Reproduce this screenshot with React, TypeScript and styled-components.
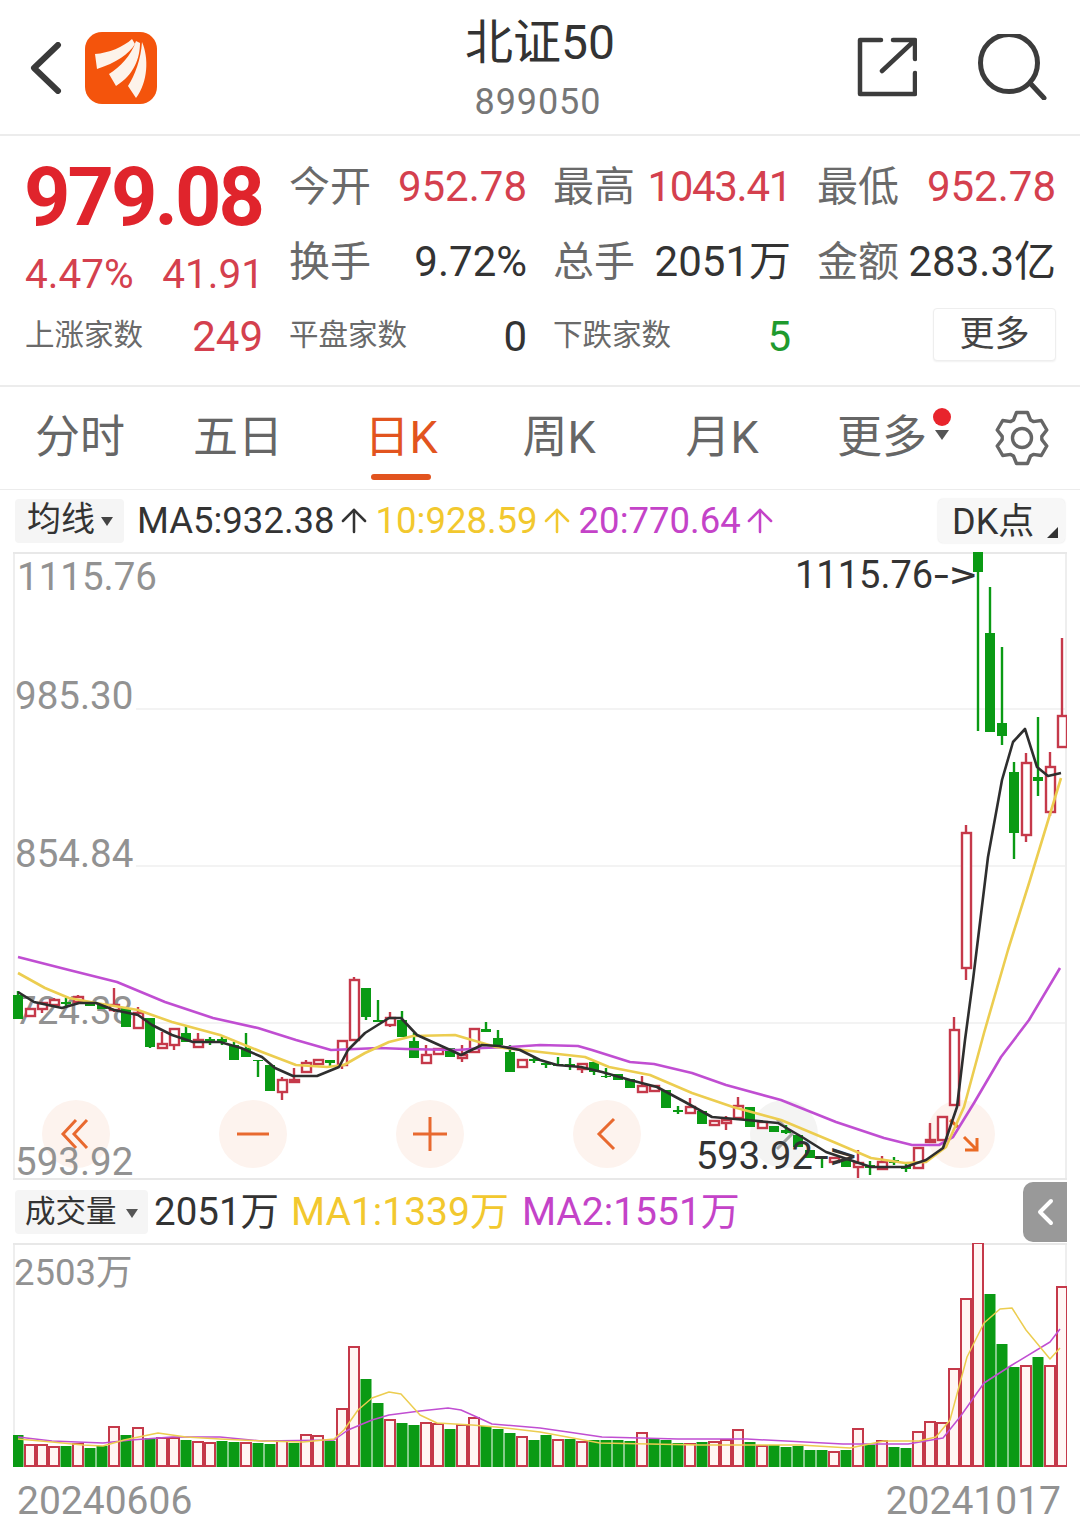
import React from 'react';
import styled, { createGlobalStyle } from 'styled-components';
import { ArrowUp } from 'lucide-react';

const GlobalStyle = createGlobalStyle`
  html, body {
    margin: 0;
    padding: 0;
    background: #fff;
  }
  body {
    font-family: Roboto, "Noto Sans CJK SC", sans-serif;
    color: #333;
  }
`;

const RED = '#c5394a';
const GREEN = '#0a9a14';
const YELLOW = '#f2c82e';
const PURPLE = '#c443c8';
const LINE_YELLOW = '#eccd50';
const LINE_PURPLE = '#c04ed2';

const Page = styled.div`
  width: 1080px;
  height: 1531px;
  overflow: hidden;
  display: flex;
  flex-direction: column;
  background: #fff;
`;

const Header = styled.header`
  height: 136px;
  box-sizing: border-box;
  border-bottom: 2px solid #ececec;
  display: grid;
  grid-template-columns: 1fr auto 1fr;
  align-items: center;
`;

const HeaderLeft = styled.div`
  display: flex;
  align-items: center;
  gap: 23px;
  padding: 2px 0 0 30px;
`;

const HeaderRight = styled.div`
  display: flex;
  justify-content: flex-end;
  align-items: center;
  gap: 60px;
  padding-right: 33px;
`;

const TitleBlock = styled.div`
  display: flex;
  flex-direction: column;
  align-items: center;
  margin-top: 6px;
`;

const Title = styled.div`
  font-size: 48px;
  line-height: 56px;
  color: #333;
`;

const Code = styled.div`
  font-size: 36px;
  line-height: 46px;
  letter-spacing: 0.9px;
  color: #777;
  margin: 8px 4px 0 0;
`;

const Stats = styled.section`
  height: 249px;
  box-sizing: border-box;
  padding: 13px 25px 0;
  display: grid;
  grid-template-columns: 237px 237px 237px 238px;
  grid-template-rows: repeat(3, 75px);
  column-gap: 27px;
`;

const Price = styled.div`
  align-self: end;
  margin: 0 0 -7px -1px;
  font-size: 81px;
  line-height: 66px;
  font-weight: 700;
  letter-spacing: -3px;
  color: #e0242c;
`;

const ChangeRow = styled.div`
  align-self: end;
  margin: 0 -2px 0 0;
  display: flex;
  justify-content: space-between;
  font-size: 40.5px;
  line-height: 50px;
  color: #d4404e;
`;

const Quote = styled.div`
  display: flex;
  justify-content: space-between;
  align-items: center;
`;

const QuoteLabel = styled.span<{ $small?: boolean }>`
  font-size: ${(p) => (p.$small ? '29.5px' : '41px')};
  line-height: 50px;
  margin-bottom: ${(p) => (p.$small ? '4px' : '0')};
  color: #6a6a6a;
`;

const QuoteValue = styled.span<{ $color?: string; $tight?: boolean }>`
  font-size: 42px;
  line-height: 50px;
  margin-right: -1px;
  letter-spacing: ${(p) => (p.$tight ? '-1.3px' : '0')};
  color: ${(p) => p.$color || '#333'};
`;

const MoreButton = styled.button`
  justify-self: end;
  align-self: center;
  width: 123px;
  height: 53px;
  margin: -5px -1px 0 0;
  padding: 0;
  border: 1px solid #eeeeee;
  border-radius: 4px;
  background: #fff;
  box-shadow: 0 1px 2px rgba(0, 0, 0, 0.06);
  font-family: inherit;
  font-size: 35px;
  line-height: 1;
  color: #444;
`;

const Tabs = styled.nav`
  height: 105px;
  box-sizing: border-box;
  border-top: 2px solid #ececec;
  border-bottom: 1px solid #ececec;
  display: grid;
  grid-template-columns: 160px 156px 170px 146px 180px 140px 1fr;
  align-items: stretch;
`;

const Tab = styled.div<{ $active?: boolean }>`
  position: relative;
  display: flex;
  align-items: center;
  justify-content: center;
  font-size: 45px;
  color: ${(p) => (p.$active ? '#e2541f' : '#666')};

  ${(p) =>
    p.$active &&
    `
    &::after {
      content: '';
      position: absolute;
      left: 55px;
      bottom: 9px;
      width: 60px;
      height: 6px;
      border-radius: 3px;
      background: #e2541f;
    }
  `}
`;

const TabLabel = styled.span`
  position: relative;
  line-height: 60px;
`;

const RedDot = styled.span`
  position: absolute;
  left: calc(100% + 6px);
  top: 0;
  width: 18px;
  height: 18px;
  border-radius: 50%;
  background: #e8242c;
`;

const Caret = styled.span<{ $color?: string; $size?: number }>`
  display: inline-block;
  width: 0;
  height: 0;
  border-left: ${(p) => p.$size || 7}px solid transparent;
  border-right: ${(p) => p.$size || 7}px solid transparent;
  border-top: ${(p) => (p.$size || 7) + 3}px solid ${(p) => p.$color || '#555'};
`;

const TabCaret = styled(Caret)`
  position: absolute;
  left: calc(100% + 8px);
  top: 22px;
`;

const GearCell = styled.div`
  display: flex;
  align-items: center;
  padding-left: 42px;
`;

const LegendRow = styled.div`
  height: 62px;
  box-sizing: border-box;
  padding: 0 15px;
  display: flex;
  align-items: center;
  gap: 11px;
`;

const Selector = styled.div`
  height: 44px;
  box-sizing: border-box;
  padding: 0 10px 4px 12px;
  margin-right: 2px;
  display: flex;
  align-items: center;
  gap: 6px;
  border-radius: 4px;
  background: #f5f5f5;
  font-size: 34px;
  line-height: 40px;
  color: #333;
  width: 109px;
`;

const SelectorCaret = styled(Caret)`
  margin-top: 4px;
`;

const LegendItem = styled.span<{ $color?: string }>`
  display: inline-flex;
  align-items: center;
  font-size: 36.5px;
  line-height: 50px;
  margin-bottom: 1px;
  color: ${(p) => p.$color || '#333'};
  white-space: nowrap;

  svg {
    margin-right: -8px;
  }
`;

const DkButton = styled.div`
  position: relative;
  margin-left: auto;
  width: 127px;
  height: 44px;
  box-sizing: border-box;
  padding: 0 0 7px 14px;
  display: flex;
  align-items: center;
  border-radius: 5px;
  background: #f7f7f7;
  box-shadow: 0 0 2px rgba(0, 0, 0, 0.12);
  font-size: 36px;
  color: #333;

  &::after {
    content: '';
    position: absolute;
    right: 7px;
    bottom: 5px;
    border-left: 11px solid transparent;
    border-bottom: 11px solid #333;
  }
`;

const ChartFrame = styled.div<{ $height: number }>`
  position: relative;
  width: 1054px;
  height: ${(p) => p.$height}px;
  margin-left: 13px;
  box-shadow: inset 0 2px 0 #e8e8e8, inset 2px 0 0 #eeeeee, inset -2px 0 0 #eeeeee;
`;

const ChartSvg = styled.svg`
  position: relative;
  display: block;
`;

const StepRow = styled.div`
  position: absolute;
  left: 29px;
  bottom: 12px;
  display: flex;
  gap: 109px;
`;

const StepButton = styled.div<{ $muted?: boolean }>`
  width: 68px;
  height: 68px;
  border-radius: 50%;
  background: ${(p) => (p.$muted ? '#f4f4f3' : '#fdf3ee')};
  display: flex;
  align-items: center;
  justify-content: center;
`;

const AxisLabel = styled.span<{ $top: number; $left?: number; $size?: number }>`
  position: absolute;
  left: ${(p) => p.$left ?? 3}px;
  top: ${(p) => p.$top}px;
  font-size: ${(p) => p.$size || 38.5}px;
  line-height: 44px;
  color: #929292;
`;

const Extreme = styled.span<{ $left: number; $top: number }>`
  position: absolute;
  left: ${(p) => p.$left}px;
  top: ${(p) => p.$top}px;
  font-size: 38px;
  line-height: 44px;
  color: #333;
  white-space: nowrap;
`;

const ExtremeArrow = styled.span`
  display: inline-block;
  transform: scaleX(1.4);
  transform-origin: left center;
  margin-left: 1px;
`;

const VolumeRow = styled(LegendRow)`
  height: 63px;
  padding-right: 13px;
  gap: 16px;
`;

const VolumeSelector = styled(Selector)`
  font-size: 30.5px;
  padding: 0 10px 0;
  gap: 9px;
  margin-right: -10px;
  width: 133px;
`;

const VolumeItem = styled.span<{ $color?: string; $size: number; $shift?: number }>`
  font-size: ${(p) => p.$size}px;
  line-height: 50px;
  margin-left: ${(p) => p.$shift || 0}px;
  margin-top: 1px;
  color: ${(p) => p.$color || '#333'};
  white-space: nowrap;
`;

const CollapseTab = styled.div`
  margin-left: auto;
  width: 44px;
  height: 60px;
  border-radius: 10px 0 0 10px;
  background: #999;
  display: flex;
  align-items: center;
  justify-content: center;
`;

const DateRow = styled.div`
  height: 64px;
  box-sizing: border-box;
  padding: 3px 19px 0 17px;
  display: flex;
  justify-content: space-between;
  align-items: center;
  font-size: 39px;
  color: #929292;
`;

// [high, bodyTop, bodyBottom, low, up] in page pixels, one candle every 12px from x=18
type Candle = [number, number, number, number, number];

const candles: Candle[] = [
  [991, 995, 1019, 1019, 0], [1009, 1009, 1016, 1016, 1], [1003, 1003, 1009, 1013, 1], [998, 1000, 1005, 1007, 1],
  [998, 1002, 1004, 1007, 0], [995, 997, 1002, 1002, 1], [1002, 1002, 1006, 1006, 0], [1005, 1005, 1009, 1009, 0],
  [988, 1005, 1010, 1012, 1], [1008, 1008, 1027, 1027, 0], [1007, 1013, 1028, 1028, 1], [1018, 1018, 1047, 1048, 0],
  [1032, 1044, 1048, 1048, 1], [1029, 1029, 1045, 1050, 1], [1026, 1033, 1042, 1042, 0], [1033, 1040, 1047, 1047, 1],
  [1037, 1039, 1042, 1045, 0], [1037, 1039, 1042, 1045, 0], [1042, 1045, 1060, 1060, 0], [1033, 1048, 1057, 1057, 0],
  [1060, 1060, 1061, 1077, 0], [1065, 1065, 1091, 1091, 0], [1077, 1080, 1092, 1100, 1], [1068, 1080, 1082, 1083, 1],
  [1060, 1063, 1072, 1072, 1], [1059, 1060, 1064, 1064, 1], [1060, 1060, 1063, 1067, 0], [1041, 1041, 1065, 1069, 1],
  [977, 980, 1040, 1040, 1], [988, 988, 1017, 1020, 0], [1000, 1020, 1022, 1022, 0], [1012, 1018, 1025, 1027, 1],
  [1011, 1020, 1037, 1037, 0], [1033, 1041, 1058, 1058, 0], [1045, 1055, 1063, 1063, 1], [1049, 1049, 1054, 1054, 1],
  [1048, 1048, 1057, 1057, 0], [1045, 1055, 1058, 1062, 1], [1029, 1029, 1052, 1052, 1], [1022, 1029, 1032, 1032, 0],
  [1030, 1038, 1045, 1045, 0], [1045, 1052, 1072, 1072, 0], [1060, 1060, 1067, 1067, 1], [1056, 1059, 1061, 1063, 0],
  [1063, 1063, 1065, 1068, 0], [1057, 1064, 1066, 1066, 0], [1058, 1064, 1066, 1070, 0], [1064, 1064, 1069, 1073, 1],
  [1060, 1062, 1072, 1075, 0], [1068, 1076, 1077, 1078, 0], [1074, 1074, 1080, 1080, 0], [1079, 1079, 1088, 1088, 0],
  [1076, 1086, 1092, 1093, 1], [1086, 1086, 1091, 1091, 1], [1090, 1090, 1108, 1108, 0], [1106, 1110, 1112, 1114, 0],
  [1098, 1107, 1113, 1113, 1], [1111, 1111, 1124, 1124, 0], [1121, 1121, 1125, 1125, 1], [1116, 1120, 1123, 1130, 1],
  [1097, 1106, 1118, 1118, 1], [1107, 1107, 1127, 1127, 0], [1122, 1122, 1128, 1128, 1], [1126, 1126, 1132, 1132, 0],
  [1125, 1130, 1133, 1134, 0], [1135, 1135, 1147, 1147, 0], [1150, 1150, 1158, 1158, 0], [1157, 1157, 1158, 1168, 0],
  [1158, 1158, 1162, 1162, 1], [1160, 1160, 1167, 1167, 0], [1150, 1163, 1167, 1180, 1], [1161, 1165, 1168, 1175, 0],
  [1156, 1162, 1169, 1169, 1], [1157, 1160, 1163, 1165, 0], [1163, 1166, 1169, 1172, 0], [1148, 1148, 1168, 1168, 1],
  [1123, 1140, 1142, 1142, 1], [1117, 1117, 1140, 1140, 1], [1017, 1030, 1105, 1105, 1], [825, 833, 968, 980, 1],
  [552, 552, 572, 731, 0], [587, 633, 732, 732, 0], [647, 723, 736, 745, 0], [762, 772, 833, 859, 0],
  [753, 763, 835, 842, 1], [717, 777, 781, 796, 0], [752, 767, 812, 816, 1], [638, 716, 747, 747, 1],
];

// [height, up] for the same 88 days
const volumes: [number, number][] = [
  [32, 0], [21, 1], [21, 1], [19, 1], [21, 0], [22, 1], [19, 0], [21, 0], [39, 1], [32, 0], [38, 1], [29, 0],
  [28, 1], [28, 1], [27, 0], [24, 1], [23, 1], [26, 0], [25, 0], [23, 1], [24, 0], [23, 0], [25, 1], [24, 0],
  [31, 1], [30, 1], [26, 0], [57, 1], [119, 1], [88, 0], [64, 0], [46, 1], [44, 0], [42, 0], [43, 1], [42, 1],
  [38, 0], [41, 1], [48, 1], [41, 0], [38, 0], [34, 0], [29, 1], [27, 0], [32, 0], [26, 1], [28, 0], [24, 1],
  [27, 0], [27, 0], [27, 0], [26, 0], [33, 1], [28, 0], [27, 0], [24, 0], [22, 1], [25, 0], [24, 1], [26, 1],
  [36, 1], [25, 0], [20, 1], [22, 0], [20, 0], [21, 0], [17, 0], [17, 0], [14, 1], [17, 0], [37, 1], [22, 0],
  [25, 1], [20, 0], [19, 0], [34, 1], [44, 1], [43, 1], [97, 1], [167, 1], [223, 1], [173, 0], [123, 0], [100, 0],
  [100, 1], [110, 0], [100, 1], [179, 1],
];

const ma5 =
  '18,992 34,1002 48,1005 62,1008 79,1003 96,1003 114,1010 138,1015 152,1025 172,1035 193,1042 220,1042 241,1048 262,1057 275,1068 293,1076 317,1076 339,1067 348,1050 365,1033 389,1018 401,1018 417,1035 448,1049 461,1055 482,1045 499,1046 520,1050 540,1060 557,1065 581,1067 602,1072 630,1080 657,1087 685,1102 712,1117 747,1120 778,1123 802,1137 826,1152 850,1160 871,1167 905,1167 926,1160 943,1148 957,1107 965,1040 973,980 988,857 1002,780 1013,742 1025,729 1037,767 1048,776 1061,773';
const ma10 =
  '18,973 45,988 69,998 96,1003 138,1010 172,1022 220,1035 262,1052 296,1065 327,1067 344,1065 365,1053 389,1042 413,1036 455,1035 472,1040 496,1047 540,1052 585,1057 609,1067 650,1075 692,1093 733,1107 781,1120 836,1143 871,1158 905,1163 926,1162 946,1147 964,1107 984,1033 1008,950 1030,880 1061,778';
const ma20 =
  '18,957 69,970 117,982 165,1002 213,1018 258,1028 296,1040 331,1050 379,1048 406,1049 458,1050 482,1048 510,1047 540,1045 578,1046 592,1050 630,1062 654,1064 692,1073 726,1085 781,1100 836,1122 884,1138 912,1145 939,1145 953,1137 974,1103 1001,1057 1029,1020 1060,968';
const volMa1 =
  '18,1439 52,1442 83,1445 103,1446 124,1440 158,1433 186,1437 220,1439 262,1441 303,1442 334,1439 344,1430 358,1410 372,1398 389,1392 401,1394 420,1415 437,1423 472,1425 496,1427 540,1432 600,1443 700,1445 800,1445 850,1448 884,1441 919,1441 936,1437 950,1420 967,1357 984,1323 1000,1309 1012,1308 1026,1330 1050,1359 1060,1348';
const volMa2 =
  '18,1437 52,1441 103,1443 131,1440 172,1437 220,1437 262,1441 334,1440 348,1430 372,1420 389,1415 420,1411 448,1408 461,1410 479,1418 492,1424 540,1428 568,1432 602,1437 678,1439 747,1439 843,1444 908,1444 943,1438 960,1417 984,1383 1012,1365 1050,1342 1060,1329';

// six blocky teeth around the centre of a 56x56 box
const gearPath =
  [0, 1, 2, 3, 4, 5]
    .flatMap((n) => {
      const a = ((n * 60 - 90) * Math.PI) / 180;
      const at = (r: number, t: number) =>
        `${(r * Math.cos(a) - t * Math.sin(a)).toFixed(1)} ${(r * Math.sin(a) + t * Math.cos(a)).toFixed(1)}`;
      return [at(18, -8.5), at(25.5, -5.5), at(25.5, 5.5), at(18, 8.5)];
    })
    .map((pt, i) => `${i === 0 ? 'M' : 'L'}${pt}`)
    .join(' ') + ' Z';

const Logo = () => (
  <svg width="72" height="72" viewBox="0 0 72 72">
    <rect width="72" height="72" rx="17" fill="#f4540c" />
    <path d="M10 22C24 21 38 15 47 7L50 12C44 22 31 31 12 37Z" fill="#fdf3ea" />
    <path d="M24 42C35 35 46 24 51 9L55 11C55 26 49 43 31 54Z" fill="#fdf3ea" />
    <path d="M43 54C50 43 56 27 57 10C64 26 63 50 51 66Z" fill="#fdf3ea" />
  </svg>
);

const BackIcon = () => (
  <svg width="32" height="52" viewBox="0 0 32 52">
    <path d="M28 3L4 26L28 49" fill="none" stroke="#3a3a3a" strokeWidth="6" strokeLinecap="round" strokeLinejoin="round" />
  </svg>
);

const ShareIcon = () => (
  <svg width="60" height="60" viewBox="0 0 60 60" fill="none" stroke="#3c3c3c" strokeWidth="4.5" strokeLinecap="round" strokeLinejoin="round">
    <path d="M24 3H3V57H58V36" />
    <path d="M36 3H58V22M25 34L56 5" />
  </svg>
);

const SearchIcon = () => (
  <svg width="70" height="66" viewBox="0 0 70 66" fill="none" stroke="#3c3c3c" strokeWidth="5">
    <circle cx="32" cy="29" r="28.5" />
    <path d="M53 49L67 64" strokeLinecap="round" />
  </svg>
);

const GearIcon = () => (
  <svg width="56" height="56" viewBox="-28 -28 56 56" fill="none" stroke="#666" strokeWidth="3.4" strokeLinejoin="round">
    <path d={gearPath} />
    <circle r="9.5" />
  </svg>
);

const StepIcon = ({ d, color = '#e8692f' }: { d: string; color?: string }) => (
  <svg width="40" height="40" viewBox="0 0 40 40" fill="none" stroke={color} strokeWidth="3">
    <path d={d} />
  </svg>
);

const CollapseIcon = () => (
  <svg width="18" height="28" viewBox="0 0 18 28">
    <path d="M15 3L4 14L15 25" fill="none" stroke="#fff" strokeWidth="4" strokeLinecap="round" strokeLinejoin="round" />
  </svg>
);

const CandleMark = ({ data, index }: { data: Candle; index: number }) => {
  const [high, top, bottom, low, up] = data;
  const x = 18 + index * 12;
  const color = up ? RED : GREEN;
  return (
    <g>
      <line x1={x} x2={x} y1={high} y2={low} stroke={color} strokeWidth="2.4" />
      {up ? (
        <rect x={x - 4} y={top} width="9" height={bottom - top} fill="#fff" stroke={color} strokeWidth="2.4" />
      ) : (
        <rect x={x - 5} y={top} width="10" height={bottom - top} fill={color} />
      )}
    </g>
  );
};

const PriceChart = () => (
  <ChartFrame $height={628}>
    <StepRow>
      <StepButton><StepIcon d="M20 6L7 20L20 34M31 6L18 20L31 34" /></StepButton>
      <StepButton><StepIcon d="M4 20H36" /></StepButton>
      <StepButton><StepIcon d="M3 20H37M20 3V37" /></StepButton>
      <StepButton><StepIcon d="M27 5L12 20L27 35" /></StepButton>
      <StepButton $muted><StepIcon d="M13 5L28 20L13 35" color="#a8a8a8" /></StepButton>
      <StepButton><StepIcon d="M9 6L17 13M23 23L36 36M36 24V36H24" color="#ea6a24" /></StepButton>
    </StepRow>
    <AxisLabel $top={3} $left={4}>1115.76</AxisLabel>
    <AxisLabel $top={122} $left={2}>985.30</AxisLabel>
    <AxisLabel $top={280} $left={2}>854.84</AxisLabel>
    <AxisLabel $top={437} $left={2}>724.38</AxisLabel>
    <AxisLabel $top={588} $left={2}>593.92</AxisLabel>
    <ChartSvg width="1054" height="628" viewBox="13 552 1054 628">
      {[709, 866, 1023].map((y) => (
        <line key={y} x1="136" x2="1065" y1={y} y2={y} stroke="#f3f3f3" strokeWidth="2" />
      ))}
      {candles.map((c, i) => (
        <CandleMark key={i} data={c} index={i} />
      ))}
      <polyline points={ma20} fill="none" stroke={LINE_PURPLE} strokeWidth="2.6" strokeLinejoin="round" />
      <polyline points={ma10} fill="none" stroke={LINE_YELLOW} strokeWidth="2.6" strokeLinejoin="round" />
      <polyline points={ma5} fill="none" stroke="#2e2e2e" strokeWidth="2.6" strokeLinejoin="round" />
      <line x1="13" x2="1067" y1="1179" y2="1179" stroke="#e8e8e8" strokeWidth="2" />
    </ChartSvg>
    <Extreme $left={782} $top={1}>1115.76<ExtremeArrow>{'->'}</ExtremeArrow></Extreme>
    <Extreme $left={683} $top={582}>593.92<ExtremeArrow>{'->'}</ExtremeArrow></Extreme>
  </ChartFrame>
);

const VolumeChart = () => (
  <ChartFrame $height={224}>
    <AxisLabel $top={8} $left={1} $size={36.5}>2503万</AxisLabel>
    <ChartSvg width="1054" height="224" viewBox="13 1243 1054 224">
      {volumes.map(([h, up], i) => {
        const x = 18 + i * 12;
        return up ? (
          <rect key={i} x={x - 5} y={1466 - h} width="10" height={h} fill="#fff6f4" stroke={RED} strokeWidth="2" />
        ) : (
          <rect key={i} x={x - 5.5} y={1467 - h} width="11" height={h} fill={GREEN} />
        );
      })}
      <polyline points={volMa2} fill="none" stroke={LINE_PURPLE} strokeWidth="1.5" strokeLinejoin="round" />
      <polyline points={volMa1} fill="none" stroke={LINE_YELLOW} strokeWidth="1.5" strokeLinejoin="round" />
    </ChartSvg>
  </ChartFrame>
);

const quoteRows = [
  [['今开', '952.78', '#d4404e'], ['最高', '1043.41', '#d4404e'], ['最低', '952.78', '#d4404e']],
  [['换手', '9.72%'], ['总手', '2051万'], ['金额', '283.3亿']],
];

export default function App() {
  return (
    <Page>
      <GlobalStyle />
      <Header>
        <HeaderLeft>
          <BackIcon />
          <Logo />
        </HeaderLeft>
        <TitleBlock>
          <Title>北证50</Title>
          <Code>899050</Code>
        </TitleBlock>
        <HeaderRight>
          <ShareIcon />
          <SearchIcon />
        </HeaderRight>
      </Header>

      <Stats>
        <Price>979.08</Price>
        {quoteRows[0].map(([label, value, color]) => (
          <Quote key={label}>
            <QuoteLabel>{label}</QuoteLabel>
            <QuoteValue $color={color} $tight={value === '1043.41'}>{value}</QuoteValue>
          </Quote>
        ))}
        <ChangeRow>
          <span>4.47%</span>
          <span>41.91</span>
        </ChangeRow>
        {quoteRows[1].map(([label, value]) => (
          <Quote key={label}>
            <QuoteLabel>{label}</QuoteLabel>
            <QuoteValue>{value}</QuoteValue>
          </Quote>
        ))}
        <Quote>
          <QuoteLabel $small>上涨家数</QuoteLabel>
          <QuoteValue $color="#d4404e">249</QuoteValue>
        </Quote>
        <Quote>
          <QuoteLabel $small>平盘家数</QuoteLabel>
          <QuoteValue>0</QuoteValue>
        </Quote>
        <Quote>
          <QuoteLabel $small>下跌家数</QuoteLabel>
          <QuoteValue $color="#1f9a2f">5</QuoteValue>
        </Quote>
        <MoreButton>更多</MoreButton>
      </Stats>

      <Tabs>
        <Tab><TabLabel>分时</TabLabel></Tab>
        <Tab><TabLabel>五日</TabLabel></Tab>
        <Tab $active><TabLabel>日K</TabLabel></Tab>
        <Tab><TabLabel>周K</TabLabel></Tab>
        <Tab><TabLabel>月K</TabLabel></Tab>
        <Tab>
          <TabLabel>
            更多
            <RedDot />
            <TabCaret $color="#555" />
          </TabLabel>
        </Tab>
        <GearCell>
          <GearIcon />
        </GearCell>
      </Tabs>

      <LegendRow>
        <Selector>
          均线
          <SelectorCaret $color="#444" $size={6} />
        </Selector>
        <LegendItem>
          MA5:932.38
          <ArrowUp size={38} strokeWidth={1.6} color="#333" />
        </LegendItem>
        <LegendItem $color={YELLOW}>
          10:928.59
          <ArrowUp size={38} strokeWidth={1.6} color={YELLOW} />
        </LegendItem>
        <LegendItem $color={PURPLE}>
          20:770.64
          <ArrowUp size={38} strokeWidth={1.6} color={PURPLE} />
        </LegendItem>
        <DkButton>DK点</DkButton>
      </LegendRow>

      <PriceChart />

      <VolumeRow>
        <VolumeSelector>
          成交量
          <SelectorCaret $color="#555" $size={6} />
        </VolumeSelector>
        <VolumeItem $size={38.5}>2051万</VolumeItem>
        <VolumeItem $size={39} $color={YELLOW} $shift={-4}>MA1:1339万</VolumeItem>
        <VolumeItem $size={39} $color={PURPLE} $shift={-3}>MA2:1551万</VolumeItem>
        <CollapseTab>
          <CollapseIcon />
        </CollapseTab>
      </VolumeRow>

      <VolumeChart />

      <DateRow>
        <span>20240606</span>
        <span>20241017</span>
      </DateRow>
    </Page>
  );
}
